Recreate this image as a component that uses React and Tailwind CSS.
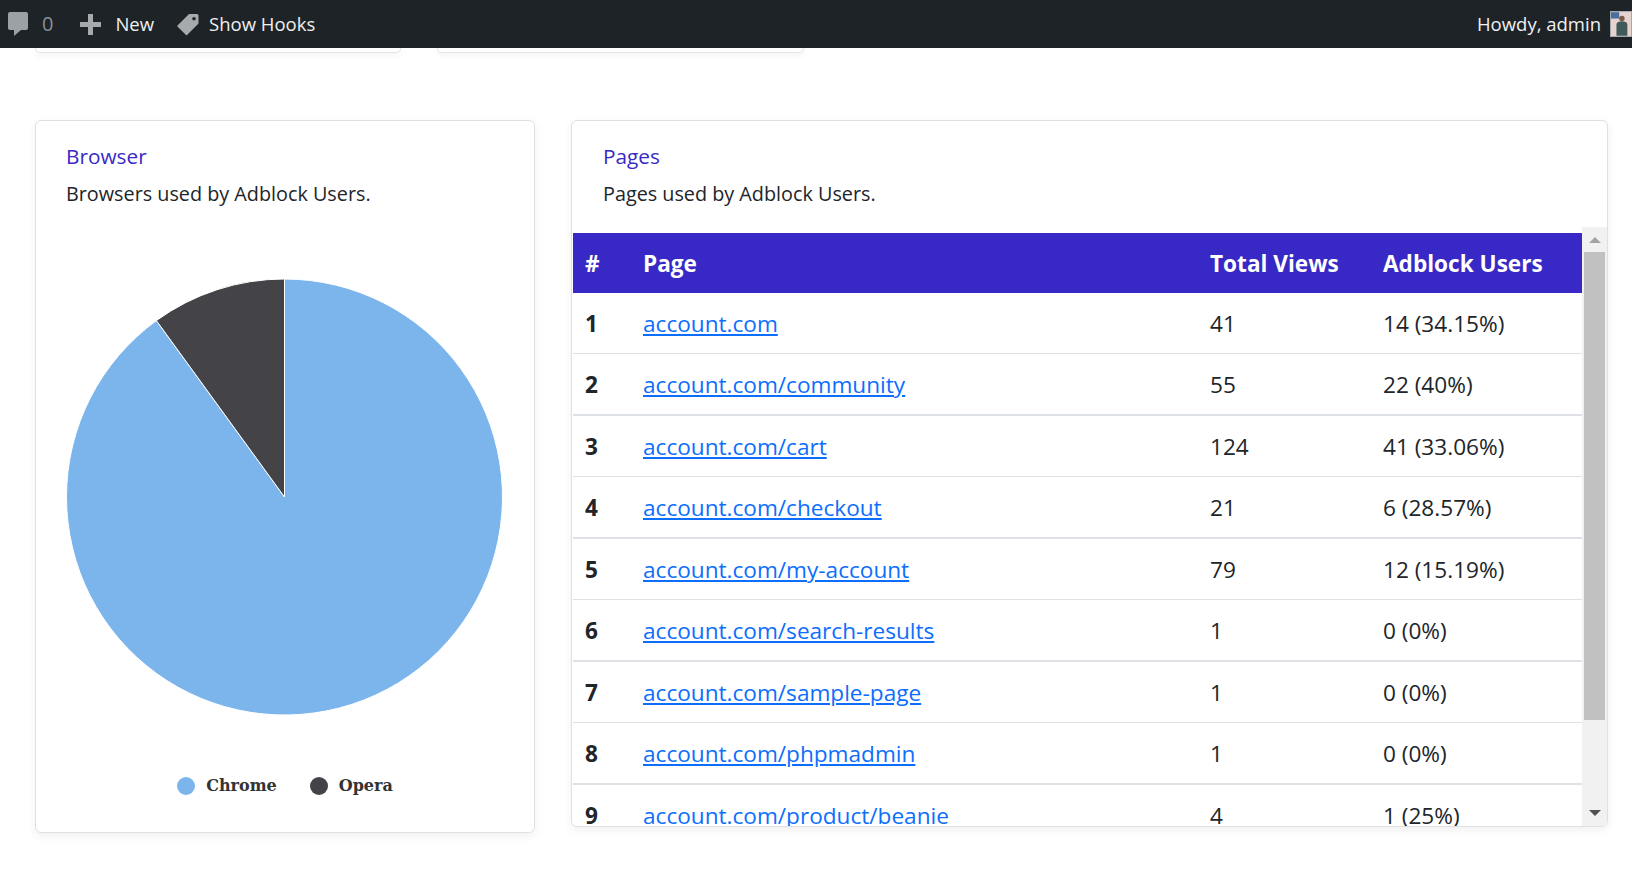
const font = "font-['Open_Sans','Noto_Sans',sans-serif]";

const rows = [
  ["1", "account.com", "41", "14 (34.15%)"],
  ["2", "account.com/community", "55", "22 (40%)"],
  ["3", "account.com/cart", "124", "41 (33.06%)"],
  ["4", "account.com/checkout", "21", "6 (28.57%)"],
  ["5", "account.com/my-account", "79", "12 (15.19%)"],
  ["6", "account.com/search-results", "1", "0 (0%)"],
  ["7", "account.com/sample-page", "1", "0 (0%)"],
  ["8", "account.com/phpmadmin", "1", "0 (0%)"],
  ["9", "account.com/product/beanie", "4", "1 (25%)"],
];

function TopBar() {
  return (
    <div className="flex h-12 items-center justify-between bg-[#1d2327] text-[18.5px] text-[#f0f0f1]">
      <div className="flex items-center">
        <svg viewBox="0 0 20 24" className="ml-2 h-6 w-5 fill-[#9ca1a7]">
          <path d="M2 0h16a2 2 0 0 1 2 2v14a2 2 0 0 1-2 2h-5l-7 6v-6H2a2 2 0 0 1-2-2V2a2 2 0 0 1 2-2z" />
        </svg>
        <span className="ml-[14px] text-[20px] text-[#8c8f94]">0</span>
        <svg viewBox="0 0 21 21" className="ml-[27px] h-[21px] w-[21px] fill-[#a7aaad]">
          <path d="M8 0h5v8h8v5h-8v8H8v-8H0V8h8z" />
        </svg>
        <span className="ml-[14px]">New</span>
        <svg viewBox="0 0 24 24" className="ml-[22px] h-6 w-6 fill-[#a7aaad]">
          <path fillRule="evenodd" d="M13 2h8a1.5 1.5 0 0 1 1.5 1.5v8L10.5 23.5 1 14zM18 5a1.8 1.8 0 1 0 0 3.6A1.8 1.8 0 0 0 18 5z" />
        </svg>
        <span className="ml-[9px]">Show Hooks</span>
      </div>
      <div className="flex items-center">
        <span>Howdy, admin</span>
        <div className="ml-[9px] h-[26px] w-[22px] overflow-hidden border border-[#a7aaad] bg-[#e8d5d0]">
          <svg viewBox="0 0 22 26" className="h-full w-full">
            <rect width="22" height="26" fill="#e6d3cf" />
            <rect x="0" y="0" width="9" height="7" fill="#4a6f9e" />
            <circle cx="12" cy="7" r="3" fill="#7a5a4a" />
            <path d="M6 26V13q1-3 6-3t6 3v13z" fill="#3f5a58" />
          </svg>
        </div>
      </div>
    </div>
  );
}

function StubCard({ className }) {
  return <div className={`h-[5px] rounded-b-md border border-t-0 border-[#e4e4e4] shadow-[0_2px_6px_rgba(60,60,90,0.08)] ${className}`} />;
}

function PieChart() {
  return (
    <svg viewBox="0 0 498 460" className="h-[460px] w-[498px]">
      <path d="M248.5 12 A218 218 0 1 1 120.4 53.6 L248.5 230 Z" fill="#7cb5ec" stroke="#fff" strokeWidth="1" />
      <path d="M248.5 230 L120.4 53.6 A218 218 0 0 1 248.5 12 Z" fill="#434348" stroke="#fff" strokeWidth="1" />
    </svg>
  );
}

function LegendItem({ color, label }) {
  return (
    <div className="flex items-center gap-[11px]">
      <span className={`h-[18px] w-[18px] rounded-full ${color}`} />
      <span className="font-['DejaVu_Serif',serif] text-[16px] font-bold text-[#333333]">{label}</span>
    </div>
  );
}

export default function App() {
  return (
    <div className={`h-[888px] overflow-hidden bg-white ${font}`}>
      <TopBar />
      <div className="flex pl-[35px]">
        <StubCard className="w-[366px]" />
        <StubCard className="ml-[36px] w-[367px]" />
      </div>
      <div className="mt-[67px] flex items-start pl-[35px]">
        <div className="h-[713px] w-[500px] rounded-md border border-[#e0e0e0] shadow-[0_3px_8px_rgba(60,60,90,0.08)]">
          <div className="px-[30px] pt-[20px] text-[19.8px] leading-[30px]">
            <div className="text-[20.8px] text-[#3829c6]">Browser</div>
            <div className="mt-[8px] text-[#212529]">Browsers used by Adblock Users.</div>
          </div>
          <div className="mt-[58px]">
            <PieChart />
          </div>
          <div className="mt-[47px] flex justify-center gap-[33px]">
            <LegendItem color="bg-[#7cb5ec]" label="Chrome" />
            <LegendItem color="bg-[#434348]" label="Opera" />
          </div>
        </div>

        <div className="ml-[36px] h-[707px] w-[1037px] rounded-md border border-[#e0e0e0] shadow-[0_3px_8px_rgba(60,60,90,0.08)]">
          <div className="h-[106px] px-[31px] pt-[20px] text-[19.8px] leading-[30px]">
            <div className="text-[20.8px] text-[#3829c6]">Pages</div>
            <div className="mt-[8px] text-[#212529]">Pages used by Adblock Users.</div>
          </div>
          <div className="flex h-[599px]">
            <div className="ml-px flex-1 overflow-hidden pt-[6px]">
              <table className="w-full table-fixed border-separate border-spacing-0 text-left text-[22.6px] leading-[30px] text-[#212529]">
                <colgroup>
                  <col className="w-[58px]" />
                  <col className="w-[567px]" />
                  <col className="w-[173px]" />
                  <col />
                </colgroup>
                <thead>
                  <tr className="h-[60px] bg-[#3829c6] text-white">
                    <th className="px-3 pt-[2px] font-bold">#</th>
                    <th className="px-3 pt-[2px] font-bold">Page</th>
                    <th className="px-3 pt-[2px] font-bold">Total Views</th>
                    <th className="px-3 pt-[2px] font-bold">Adblock Users</th>
                  </tr>
                </thead>
                <tbody>
                  {rows.map((r, i) => {
                    // hairlines fall 1px, 2px, 1px... in the reference
                    const cell = i % 2 ? "h-[62px] border-b-2 border-[#dee2e6] px-3 pt-[2px]" : "h-[61px] border-b border-[#dee2e6] px-3 pt-[2px]";
                    return (
                      <tr key={r[0]}>
                        <td className={`${cell} font-bold`}>{r[0]}</td>
                        <td className={cell}>
                          <a href="#" className="text-[#0d6efd] underline">{r[1]}</a>
                        </td>
                        <td className={cell}>{r[2]}</td>
                        <td className={cell}>{r[3]}</td>
                      </tr>
                    );
                  })}
                </tbody>
              </table>
            </div>
            <div className="flex w-[25px] flex-col items-center bg-[#f1f1f1]">
              <div className="mt-[10px] h-0 w-0 border-x-[6px] border-b-[6px] border-x-transparent border-b-[#a3a3a3]" />
              <div className="mt-[9px] h-[468px] w-[21px] bg-[#c1c1c1]" />
              <div className="mt-auto mb-[10px] h-0 w-0 border-x-[6px] border-t-[6px] border-x-transparent border-t-[#505050]" />
            </div>
          </div>
        </div>
      </div>
    </div>
  );
}
